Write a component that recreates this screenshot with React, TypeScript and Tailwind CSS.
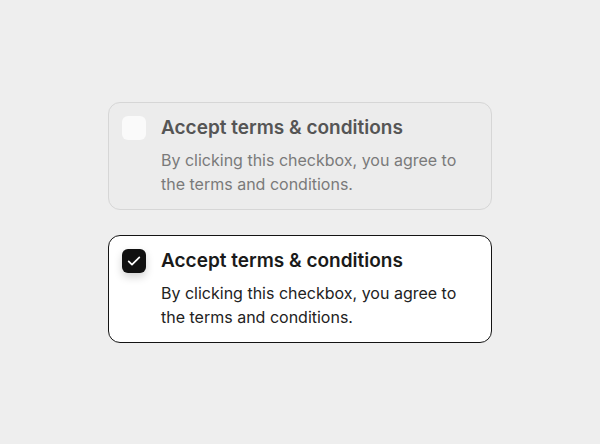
import React from "react";

function Card({ checked }: { checked: boolean }) {
  return (
    <div
      className={
        checked
          ? "flex w-[384px] gap-[15px] rounded-[12px] border border-[#141414] bg-white px-[13px] py-[13px]"
          : "flex w-[384px] gap-[15px] rounded-[12px] border border-[#d6d6d6] bg-[#ececec] px-[13px] py-[13px]"
      }
    >
      <div
        className={
          checked
            ? "flex h-[24px] w-[24px] shrink-0 items-center justify-center rounded-[6px] bg-[#111111] shadow-[0_4px_8px_rgba(0,0,0,0.18)]"
            : "h-[24px] w-[24px] shrink-0 rounded-[6px] bg-[#fafafa]"
        }
      >
        {checked && (
          <svg width="16" height="16" viewBox="0 0 24 24" fill="none" stroke="white" strokeWidth="2.6" strokeLinecap="round" strokeLinejoin="round">
            <path d="M4 12.5l5 5L20 6.5" />
          </svg>
        )}
      </div>
      <div className="flex flex-col gap-[8px]">
        <div
          className={
            checked
              ? "text-[19px] font-semibold leading-[24px] text-[#1a1a1a]"
              : "text-[19px] font-semibold leading-[24px] text-[#555555]"
          }
        >
          Accept terms &amp; conditions
        </div>
        <div
          className={
            checked
              ? "pr-[18px] text-[16px] leading-[24px] text-[#222222]"
              : "pr-[18px] text-[16px] leading-[24px] text-[#7a7a7a]"
          }
        >
          By clicking this checkbox, you agree to the terms and conditions.
        </div>
      </div>
    </div>
  );
}

export default function App() {
  return (
    <div
      className="flex h-[444px] w-[600px] flex-col items-center justify-center gap-[25px] bg-[#eeeeee]"
      style={{ fontFamily: "Inter, 'Noto Sans', sans-serif" }}
    >
      <Card checked={false} />
      <Card checked={true} />
    </div>
  );
}
